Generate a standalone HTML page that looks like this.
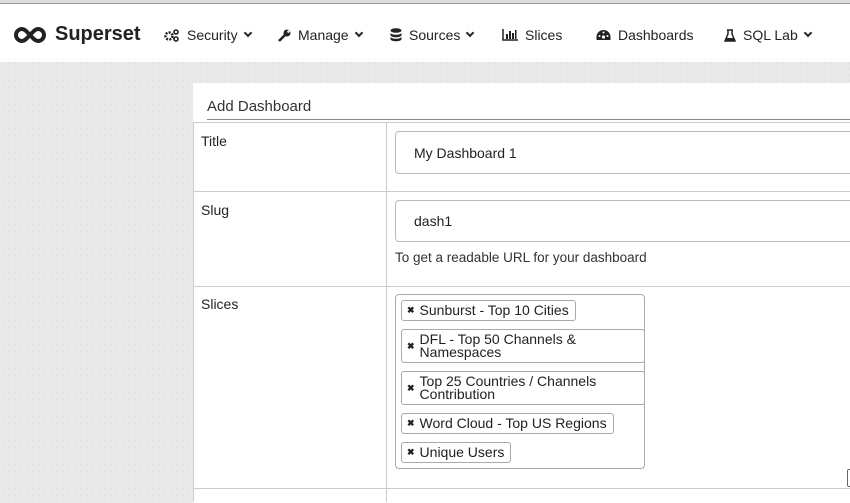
<!DOCTYPE html>
<html><head><meta charset="utf-8"><style>
*{margin:0;padding:0;box-sizing:border-box}
body{width:850px;height:494px;overflow:hidden;font-family:"Liberation Sans",Arial,sans-serif;color:#222;position:relative;
background-color:#e9e9e9;background-image:radial-gradient(#d6d6d6 0.6px,transparent 0.7px);background-size:6px 6px}
.topstrip{position:absolute;left:0;top:0;width:850px;height:4px;background:#ddd;border-bottom:1px solid #999}
nav{position:absolute;left:0;top:4px;width:850px;height:58px;background:#fff}
.it{position:absolute;top:23px;font-size:14px;color:#222;display:flex;align-items:center;white-space:nowrap}
.it svg{margin-right:7px}
.car{display:inline-block;margin-left:7px;width:6px;height:6px;border-right:2px solid #222;border-bottom:2px solid #222;transform:rotate(45deg);margin-top:-4px}
.brand{position:absolute;left:14px;top:19px;font-weight:bold;font-size:20px;display:flex;align-items:center}
.panel{position:absolute;left:193px;top:83px;width:660px;height:420px;background:#fff}
.hd{position:absolute;left:207px;top:98px;font-size:15px;color:#333}
.hl{position:absolute;left:207px;top:119px;width:650px;height:1px;background:#888}
.h{position:absolute;left:193px;width:660px;height:1px;background:#ccc}
.v{position:absolute;left:386px;top:122px;width:1px;height:380px;background:#ccc}
.lb{position:absolute;left:201px;font-size:14px;color:#222}
.inp{position:absolute;left:395px;width:470px;border:1px solid #bbb;border-radius:4px;font-size:14px;padding-left:18px;display:flex;align-items:center}
.help{position:absolute;left:395px;top:250px;font-size:13.5px;color:#333}
.sel{position:absolute;left:395px;top:294px;width:250px;height:175px;border:1px solid #aaa;border-radius:4px}
.tag{position:absolute;left:5px;border:1px solid #aaa;border-radius:3px;font-size:14px;line-height:13px;display:flex;align-items:center;padding:2px 4px 2px 4px;color:#222}
.tag b{font-size:9px;margin-right:5px;margin-left:1px}
</style></head><body>
<div class="topstrip"></div>
<nav>
<div class="brand"><svg width="32" height="18" viewBox="0 0 32 18"><path d="M8 3a6 6 0 1 0 0 12c3 0 5-3 8-6s5-6 8-6a6 6 0 1 1 0 12c-3 0-5-3-8-6S11 3 8 3z" fill="none" stroke="#222" stroke-width="4"/></svg><span style="margin-left:9px">Superset</span></div>
<div class="it" style="left:164px"><svg width="16" height="14" viewBox="0 0 16 14"><circle cx="5" cy="8" r="3.5" fill="none" stroke="#222" stroke-width="2.5" stroke-dasharray="2 1.2"/><circle cx="12" cy="4" r="2" fill="none" stroke="#222" stroke-width="1.6"/><circle cx="12" cy="11" r="2" fill="none" stroke="#222" stroke-width="1.6"/></svg>Security<span class="car"></span></div>
<div class="it" style="left:278px"><svg width="13" height="13" viewBox="0 0 13 13"><path d="M1 12L7 6" stroke="#222" stroke-width="2.5"/><circle cx="9" cy="4" r="3.5" fill="#222"/><circle cx="10.5" cy="2.5" r="1.3" fill="#fff"/></svg>Manage<span class="car"></span></div>
<div class="it" style="left:390px"><svg width="12" height="14" viewBox="0 0 12 14"><ellipse cx="6" cy="2.5" rx="5.5" ry="2.3" fill="#222"/><path d="M.5 4.5c0 3 11 3 11 0v2.5c0 3-11 3-11 0zM.5 8.5c0 3 11 3 11 0v2.5c0 3-11 3-11 0z" fill="#222"/></svg>Sources<span class="car"></span></div>
<div class="it" style="left:502px"><svg width="16" height="12" viewBox="0 0 16 12"><path d="M1 0v11h15" stroke="#222" stroke-width="1.5" fill="none"/><rect x="4" y="5" width="2" height="5" fill="#222"/><rect x="7" y="2" width="2" height="8" fill="#222"/><rect x="10" y="4" width="2" height="6" fill="#222"/><rect x="13" y="1" width="1.5" height="9" fill="#222"/></svg>Slices</div>
<div class="it" style="left:596px"><svg width="15" height="12" viewBox="0 0 15 12"><path d="M7.5 1a7 7 0 0 0-7 7v3h14V8a7 7 0 0 0-7-7z" fill="#222"/><circle cx="7.5" cy="8" r="1.6" fill="#fff"/><circle cx="3.5" cy="7" r="1" fill="#fff"/><circle cx="11.5" cy="7" r="1" fill="#fff"/><circle cx="7.5" cy="3.5" r="1" fill="#fff"/></svg>Dashboards</div>
<div class="it" style="left:724px"><svg width="12" height="13" viewBox="0 0 12 13"><path d="M3 1h6M4 1v4L1 12h10L8 5V1" fill="none" stroke="#222" stroke-width="1.5"/><path d="M2.5 9h7l1 3H1z" fill="#222"/></svg>SQL Lab<span class="car"></span></div>
</nav>
<div class="panel"></div>
<div class="hd">Add Dashboard</div>
<div class="hl"></div>
<div class="h" style="top:122px"></div>
<div class="h" style="top:191px"></div>
<div class="h" style="top:286px"></div>
<div class="h" style="top:488px"></div>
<div style="position:absolute;left:193px;top:122px;width:1px;height:380px;background:#ccc"></div>
<div class="v"></div>
<div class="lb" style="top:133px">Title</div>
<div class="lb" style="top:202px">Slug</div>
<div class="lb" style="top:296px">Slices</div>
<div class="inp" style="top:131px;height:43px">My Dashboard 1</div>
<div class="inp" style="top:200px;height:42px">dash1</div>
<div class="help">To get a readable URL for your dashboard</div>
<div class="sel">
<div class="tag" style="top:5px;width:175px;height:21px"><b>✖</b>Sunburst - Top 10 Cities</div>
<div class="tag" style="top:34px;width:244px;height:34px"><b>✖</b><span>DFL - Top 50 Channels &amp;<br>Namespaces</span></div>
<div class="tag" style="top:76px;width:244px;height:34px"><b>✖</b><span>Top 25 Countries / Channels<br>Contribution</span></div>
<div class="tag" style="top:118px;width:213px;height:21px"><b>✖</b>Word Cloud - Top US Regions</div>
<div class="tag" style="top:147px;width:110px;height:21px"><b>✖</b>Unique Users</div>
</div>
<div style="position:absolute;left:847px;top:469px;width:6px;height:18px;border:1px solid #666;border-radius:2px"></div>
</body></html>
